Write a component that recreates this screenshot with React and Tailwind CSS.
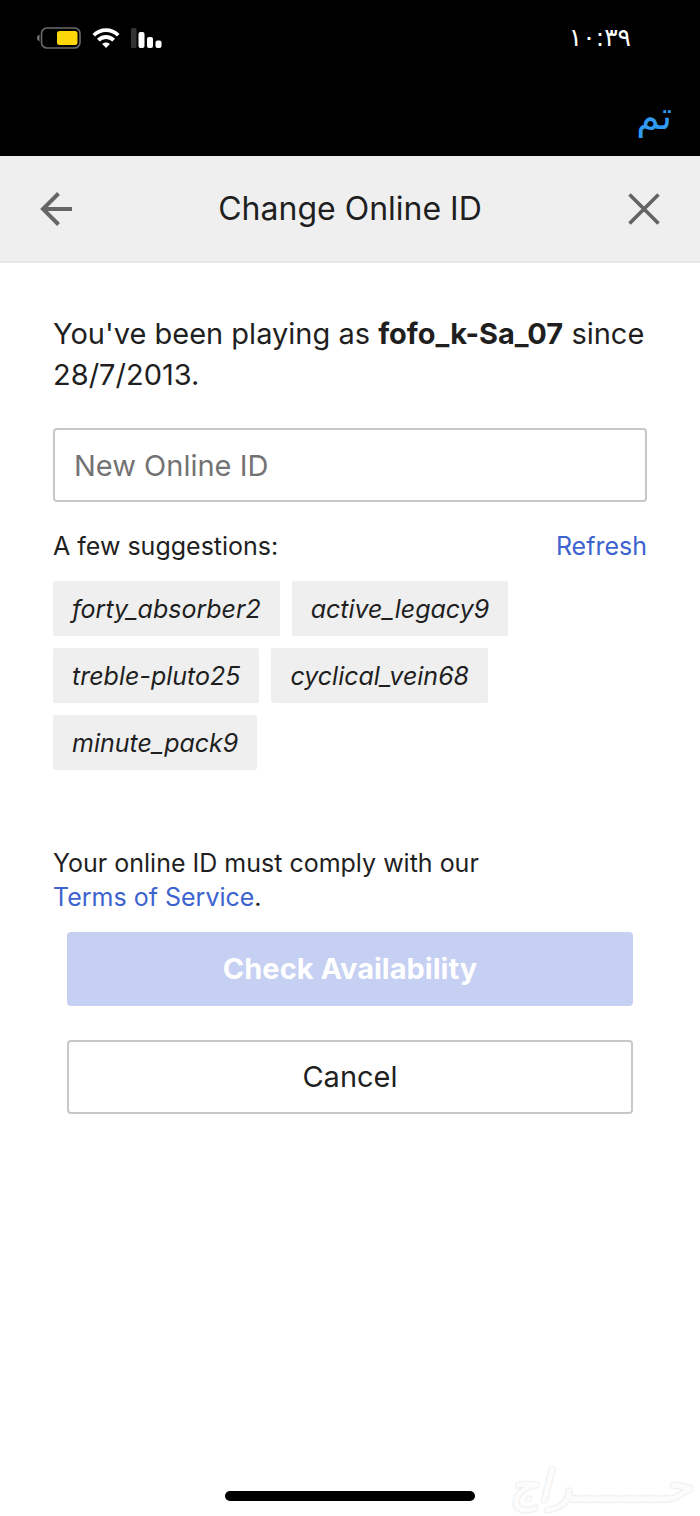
import { useState } from 'react'

const SUGGESTIONS = ['forty_absorber2', 'active_legacy9', 'treble-pluto25', 'cyclical_vein68', 'minute_pack9']

function BatteryIcon() {
  return (
    <svg width="44" height="22" viewBox="0 0 44 22" fill="none" aria-hidden="true">
      <path d="M2.5 7.5C0.8 8.5 0 9.6 0 11s.8 2.5 2.5 3.5z" fill="#777" />
      <rect x="4.5" y="1" width="38.5" height="20" rx="5.5" stroke="#6b6b6b" strokeWidth="1.6" />
      <rect x="20" y="4" width="20.5" height="14" rx="2.5" fill="#ffd60a" />
    </svg>
  )
}

function WifiIcon() {
  return (
    <svg width="28" height="20" viewBox="0 0 28 20" fill="none" stroke="#fff" strokeWidth="3.8" aria-hidden="true">
      <path d="M1.8 7.3C8.5 0.3 19.5 0.3 26.2 7.3" />
      <path d="M6.3 12.2C10.5 7.9 17.5 7.9 21.7 12.2" />
      <path d="M14 20l-3.8-4c2-2 5.6-2 7.6 0z" fill="#fff" stroke="none" />
    </svg>
  )
}

function SignalIcon() {
  return (
    <svg width="32" height="20" viewBox="0 0 32 20" fill="#fff" aria-hidden="true">
      <rect x="0" y="0" width="5.5" height="20" rx="1.5" fill="#333" />
      <rect x="7.5" y="4" width="6" height="16" rx="2" />
      <rect x="16" y="9" width="6" height="11" rx="2" />
      <rect x="24.500" y="12.5" width="6" height="7.500" rx="2" />
    </svg>
  )
}

function StatusBar() {
  return (
    <div className="flex h-[76px] items-center justify-between bg-black pr-[69px] pl-[37px] text-white">
      <div className="flex items-center gap-[11px]">
        <BatteryIcon />
        <WifiIcon />
        <SignalIcon />
      </div>
      <time lang="ar" className="font-['DejaVu_Sans',sans-serif] text-[25px] leading-8">١٠:٣٩</time>
    </div>
  )
}

function PageHeader() {
  return (
    <header className="flex h-[107px] items-center justify-between border-b-2 border-[#e6e6e6] bg-[#efefef] px-10">
      <button type="button" aria-label="Back">
        <svg width="32" height="34" viewBox="0 0 32 34" fill="none" stroke="#666" strokeWidth="4" aria-hidden="true">
          <path d="M3 17H32" />
          <path d="M18.5 1.5L3 17l15.500 15.500" />
        </svg>
      </button>
      <h1 className="text-[32px] leading-10 text-[#1f1f1f]">Change Online ID</h1>
      <button type="button" aria-label="Close">
        <svg width="32" height="32" viewBox="0 0 32 32" fill="none" stroke="#636363" strokeWidth="3.6" aria-hidden="true">
          <path d="M1.5 1.5l29 29M30.5 1.5l-29 29" />
        </svg>
      </button>
    </header>
  )
}

export default function App() {
  const [onlineId, setOnlineId] = useState('')

  return (
    <div className="flex min-h-screen flex-col bg-white font-['Inter',sans-serif] text-[#1f1f1f]">
      <StatusBar />
      <div className="flex h-20 items-center justify-end bg-black px-7">
        <button type="button" lang="ar" className="font-['DejaVu_Sans',sans-serif] text-[38px] leading-10 text-[#2f9bf5]">
          تم
        </button>
      </div>
      <PageHeader />

      <main className="px-[53px] pt-[50px]">
        <p className="text-[29px] leading-[41px]">
          You've been playing as <strong className="font-bold">fofo_k-Sa_07</strong> since 28/7/2013.
        </p>

        <input
          type="text"
          aria-label="New Online ID"
          placeholder="New Online ID"
          value={onlineId}
          onChange={(e) => setOnlineId(e.target.value)}
          className="mt-[33px] h-[74px] w-full rounded-sm border-2 border-[#c8c8c8] px-[19px] text-[29px] placeholder:text-[#737373]"
        />

        <div className="mt-[27px] flex items-center justify-between text-[25px] leading-[34px]">
          <h2>A few suggestions:</h2>
          <button type="button" className="text-[#3d63cf]">Refresh</button>
        </div>

        <ul className="mt-[18px] flex flex-wrap gap-3">
          {SUGGESTIONS.map((name) => (
            <li key={name}>
              <button
                type="button"
                onClick={() => setOnlineId(name)}
                className="block h-[55px] rounded-xs bg-[#efefef] px-[19px] text-[25px] leading-[34px] italic"
              >
                {name}
              </button>
            </li>
          ))}
        </ul>

        <p className="mt-[76px] text-[25px] leading-[34px]">
          Your online ID must comply with our
          <br />
          <a href="#terms" className="text-[#3d63cf]">Terms of Service</a>.
        </p>

        <div className="mt-[18px] flex flex-col gap-[34px] px-[14px] text-[29px]">
          <button type="button" disabled={!onlineId} className="h-[74px] rounded-sm bg-[#3d63cf] font-bold text-white disabled:bg-[#c5d0f2]">
            Check Availability
          </button>
          <button type="button" className="h-[74px] rounded-sm border-2 border-[#c8c8c8]">
            Cancel
          </button>
        </div>
      </main>

      <footer className="relative mt-auto flex h-16 items-end justify-center pb-[15px]">
        <div className="h-[10px] w-[250px] rounded-full bg-black" />
        <span
          lang="ar"
          className="absolute right-2 bottom-0 font-['DejaVu_Sans',sans-serif] text-[44px] leading-[60px] font-bold text-[#fcfcfc] italic [text-shadow:0_0_2px_#d0d0d0]"
        >
          حـــــــراج
        </span>
      </footer>
    </div>
  )
}
